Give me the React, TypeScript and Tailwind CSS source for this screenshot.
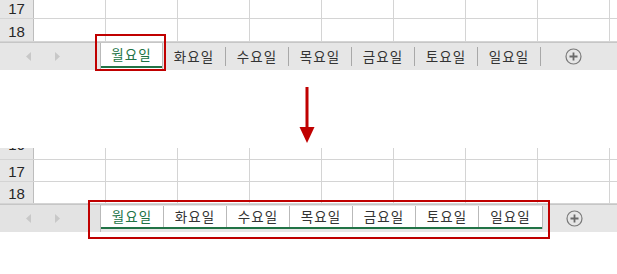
import React from 'react';

const days = ['월요일', '화요일', '수요일', '목요일', '금요일', '토요일', '일요일'];
const cols = [0, 1, 2, 3, 4, 5, 6, 7];

const numText = "text-[15px] text-[#262626] font-['Liberation_Sans',sans-serif] leading-none";

function Row({ label, h }: { label?: string; h: string }) {
  return (
    <div className={`flex ${h} border-b border-[#d4d4d4]`}>
      <div className={`w-[34px] shrink-0 bg-[#e6e6e6] border-r border-[#bdbdbd] flex items-end justify-center pb-[2px] ${numText}`}>
        {label}
      </div>
      {cols.map((c) => (
        <div key={c} className="w-[72px] shrink-0 border-r border-[#d4d4d4]" />
      ))}
    </div>
  );
}

function Arrows() {
  return (
    <>
      <svg width="6" height="9" viewBox="0 0 6 9">
        <path d="M5 0 L0 4.5 L5 9 Z" fill="#c8c8c8" />
      </svg>
      <svg width="6" height="9" viewBox="0 0 6 9">
        <path d="M1 0 L6 4.5 L1 9 Z" fill="#c8c8c8" />
      </svg>
    </>
  );
}

function PlusIcon() {
  return (
    <svg width="17" height="17" viewBox="0 0 17 17">
      <circle cx="8.5" cy="8.5" r="7.5" fill="none" stroke="#7a7a7a" strokeWidth="1.2" />
      <path d="M8.5 4.5 V12.5 M4.5 8.5 H12.5" stroke="#6a6a6a" strokeWidth="1.8" />
    </svg>
  );
}

const tabText = "text-[13.5px] font-['Noto_Sans_CJK_KR','Liberation_Sans',sans-serif] tracking-[1px]";

function TabBarBefore() {
  return (
    <div className="flex h-[28px] bg-[#e6e6e6] border-t border-[#c6c6c6]">
      <div className="w-[100px] shrink-0 flex items-center pl-[26px] gap-[22px]">
        <Arrows />
      </div>
      <div className="w-[63px] shrink-0 bg-white border-l border-r border-[#b9b9b9] flex flex-col">
        <div className={`flex-1 flex items-center justify-center text-[#217346] ${tabText}`}>월요일</div>
        <div className="h-[2px] bg-[#217346] mb-[2px]" />
      </div>
      {days.slice(1).map((d) => (
        <div key={d} className="w-[63px] shrink-0 flex items-center">
          <div className={`flex-1 text-center text-[#333] ${tabText}`}>{d}</div>
          <div className="w-px h-[19px] bg-[#a8a8a8]" />
        </div>
      ))}
      <div className="flex-1 flex items-center justify-center pr-[12px]">
        <PlusIcon />
      </div>
    </div>
  );
}

function TabBarAfter() {
  return (
    <div className="flex h-[28px] bg-[#e6e6e6] border-t border-[#c6c6c6]">
      <div className="w-[101px] shrink-0 flex items-center pl-[26px] gap-[22px] bg-[#e3e3e3] border-r border-[#b9b9b9]">
        <Arrows />
      </div>
      <div className="flex flex-col bg-white mt-[1px] mb-[3px] border-r border-[#b9b9b9]">
        <div className="flex flex-1">
          {days.map((d, i) => (
            <div
              key={d}
              className={`w-[63px] shrink-0 flex items-center justify-center ${i < days.length - 1 ? 'border-r border-[#b9b9b9]' : ''} ${tabText} ${i === 0 ? 'text-[#217346]' : 'text-[#333]'}`}
            >
              {d}
            </div>
          ))}
        </div>
        <div className="h-[2px] bg-[#217346]" />
      </div>
      <div className="flex-1 flex items-center justify-center pr-[12px]">
        <PlusIcon />
      </div>
    </div>
  );
}

export default function App() {
  return (
    <div className="relative w-[617px] h-[274px] bg-white overflow-hidden">
      {/* before */}
      <div className="h-[70px] flex flex-col">
        <Row label="17" h="h-[19px]" />
        <Row label="18" h="h-[23px]" />
        <TabBarBefore />
      </div>

      {/* arrow */}
      <div className="h-[78px] flex justify-center pt-[17px] pr-[3px]">
        <svg width="16" height="56" viewBox="0 0 16 56">
          <rect x="6.5" y="0" width="3" height="42" fill="#c00000" />
          <path d="M0.5 40 L15.5 40 L8 56 Z" fill="#c00000" />
        </svg>
      </div>

      {/* after */}
      <div className="flex flex-col">
        <div className="flex h-[12px] border-b border-[#d4d4d4] overflow-hidden">
          <div className={`w-[34px] shrink-0 bg-[#e6e6e6] border-r border-[#bdbdbd] flex items-start justify-center ${numText}`}>
            <span className="-mt-[11px]">16</span>
          </div>
          {cols.map((c) => (
            <div key={c} className="w-[72px] shrink-0 border-r border-[#d4d4d4]" />
          ))}
        </div>
        <Row label="17" h="h-[22px]" />
        <Row label="18" h="h-[22px]" />
        <TabBarAfter />
      </div>

      {/* highlight boxes */}
      <div className="absolute left-[95px] top-[34px] w-[71px] h-[37px] border-2 border-[#c00000]" />
      <div className="absolute left-[88px] top-[200px] w-[462px] h-[39px] border-2 border-[#c00000]" />
    </div>
  );
}
